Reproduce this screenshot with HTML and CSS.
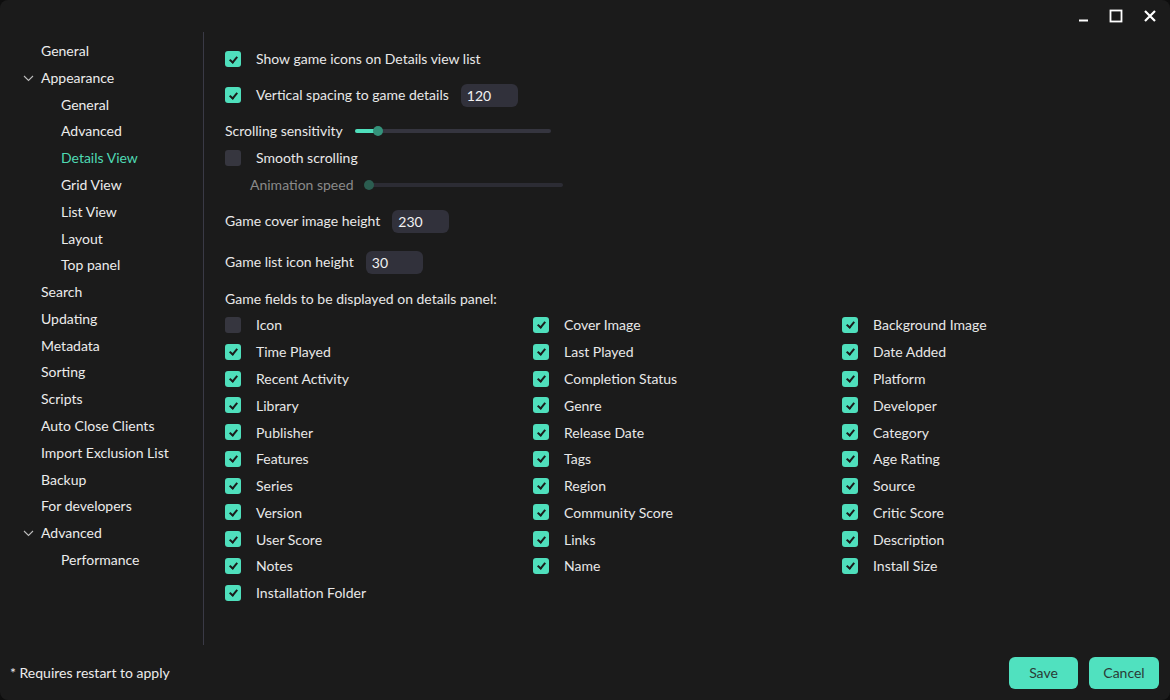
FILE: index.html
```html
<!DOCTYPE html>
<html>
<head>
<meta charset="utf-8">
<link rel="stylesheet" href="styles.css">
</head>
<body>
<div class="window">
  <div class="titlebar">
    <div class="wc wc-min"><svg width="12" height="12" viewBox="0 0 12 12"><line x1="1" y1="9.5" x2="10" y2="9.5" stroke="#fff" stroke-width="2"/></svg></div>
    <div class="wc wc-max"><svg width="14" height="14" viewBox="0 0 14 14"><rect x="1.5" y="1.5" width="11" height="11" fill="none" stroke="#fff" stroke-width="1.8"/></svg></div>
    <div class="wc wc-close"><svg width="14" height="14" viewBox="0 0 14 14"><path d="M2 2 L12 12 M12 2 L2 12" stroke="#fff" stroke-width="2.2"/></svg></div>
  </div>
  <div class="main">
    <nav class="sidebar">
      <div class="nav l1">General</div>
      <div class="nav l1"><span class="chev"><svg width="11" height="7" viewBox="0 0 11 7"><path d="M1 1 L5.5 5.5 L10 1" fill="none" stroke="#bbb" stroke-width="1.1"/></svg></span>Appearance</div>
      <div class="nav l2">General</div>
      <div class="nav l2">Advanced</div>
      <div class="nav l2 active">Details View</div>
      <div class="nav l2">Grid View</div>
      <div class="nav l2">List View</div>
      <div class="nav l2">Layout</div>
      <div class="nav l2">Top panel</div>
      <div class="nav l1">Search</div>
      <div class="nav l1">Updating</div>
      <div class="nav l1">Metadata</div>
      <div class="nav l1">Sorting</div>
      <div class="nav l1">Scripts</div>
      <div class="nav l1">Auto Close Clients</div>
      <div class="nav l1">Import Exclusion List</div>
      <div class="nav l1">Backup</div>
      <div class="nav l1">For developers</div>
      <div class="nav l1"><span class="chev"><svg width="11" height="7" viewBox="0 0 11 7"><path d="M1 1 L5.5 5.5 L10 1" fill="none" stroke="#bbb" stroke-width="1.1"/></svg></span>Advanced</div>
      <div class="nav l2">Performance</div>
    </nav>
    <section class="content">
      <div class="row r1"><span class="cb on"></span><span class="lbl">Show game icons on Details view list</span></div>
      <div class="row r2"><span class="cb on"></span><span class="lbl">Vertical spacing to game details</span><span class="input">120</span></div>
      <div class="row r3"><span class="plain">Scrolling sensitivity</span>
        <div class="slider s1"><div class="fill"></div><div class="thumb"></div></div></div>
      <div class="row r4"><span class="cb"></span><span class="lbl">Smooth scrolling</span></div>
      <div class="row r5"><span class="plain dim">Animation speed</span>
        <div class="slider s2"><div class="thumb"></div></div></div>
      <div class="row r6"><span class="plain">Game cover image height</span><span class="input">230</span></div>
      <div class="row r7"><span class="plain">Game list icon height</span><span class="input">30</span></div>
      <div class="row r8"><span class="plain">Game fields to be displayed on details panel:</span></div>
      <div class="fields">
        <div class="f"><span class="cb"></span><span class="lbl">Icon</span></div>
        <div class="f"><span class="cb on"></span><span class="lbl">Cover Image</span></div>
        <div class="f"><span class="cb on"></span><span class="lbl">Background Image</span></div>
        <div class="f"><span class="cb on"></span><span class="lbl">Time Played</span></div>
        <div class="f"><span class="cb on"></span><span class="lbl">Last Played</span></div>
        <div class="f"><span class="cb on"></span><span class="lbl">Date Added</span></div>
        <div class="f"><span class="cb on"></span><span class="lbl">Recent Activity</span></div>
        <div class="f"><span class="cb on"></span><span class="lbl">Completion Status</span></div>
        <div class="f"><span class="cb on"></span><span class="lbl">Platform</span></div>
        <div class="f"><span class="cb on"></span><span class="lbl">Library</span></div>
        <div class="f"><span class="cb on"></span><span class="lbl">Genre</span></div>
        <div class="f"><span class="cb on"></span><span class="lbl">Developer</span></div>
        <div class="f"><span class="cb on"></span><span class="lbl">Publisher</span></div>
        <div class="f"><span class="cb on"></span><span class="lbl">Release Date</span></div>
        <div class="f"><span class="cb on"></span><span class="lbl">Category</span></div>
        <div class="f"><span class="cb on"></span><span class="lbl">Features</span></div>
        <div class="f"><span class="cb on"></span><span class="lbl">Tags</span></div>
        <div class="f"><span class="cb on"></span><span class="lbl">Age Rating</span></div>
        <div class="f"><span class="cb on"></span><span class="lbl">Series</span></div>
        <div class="f"><span class="cb on"></span><span class="lbl">Region</span></div>
        <div class="f"><span class="cb on"></span><span class="lbl">Source</span></div>
        <div class="f"><span class="cb on"></span><span class="lbl">Version</span></div>
        <div class="f"><span class="cb on"></span><span class="lbl">Community Score</span></div>
        <div class="f"><span class="cb on"></span><span class="lbl">Critic Score</span></div>
        <div class="f"><span class="cb on"></span><span class="lbl">User Score</span></div>
        <div class="f"><span class="cb on"></span><span class="lbl">Links</span></div>
        <div class="f"><span class="cb on"></span><span class="lbl">Description</span></div>
        <div class="f"><span class="cb on"></span><span class="lbl">Notes</span></div>
        <div class="f"><span class="cb on"></span><span class="lbl">Name</span></div>
        <div class="f"><span class="cb on"></span><span class="lbl">Install Size</span></div>
        <div class="f"><span class="cb on"></span><span class="lbl">Installation Folder</span></div>
      </div>
    </section>
  </div>
  <div class="footer">
    <span class="note">* Requires restart to apply</span>
    <div class="buttons">
      <button class="btn">Save</button>
      <button class="btn">Cancel</button>
    </div>
  </div>
</div>
</body>
</html>
```

FILE: styles.css
```css
* { box-sizing: border-box; }
html, body {
  margin: 0;
  padding: 0;
  background: #0e0e0e;
}
body {
  font-family: Lato, "Open Sans", sans-serif;
  font-size: 14px;
  color: #e8e8e8;
}
.window {
  width: 1170px;
  height: 700px;
  background: #1b1b1b;
  border-radius: 8px;
  display: flex;
  flex-direction: column;
  overflow: hidden;
}
.titlebar {
  height: 32px;
  display: flex;
  justify-content: flex-end;
  align-items: center;
  padding-right: 3px;
}
.wc {
  width: 34px;
  height: 32px;
  display: flex;
  align-items: center;
  justify-content: center;
}
.wc-min svg { margin-top: 2px; margin-left: 3px; }
.wc-max svg { margin-left: 0; }
.main {
  height: 613px;
  display: flex;
}
.sidebar {
  width: 204px;
  border-right: 1px solid #3a3a46;
  padding-top: 5.2px;
}
.nav {
  height: 26.79px;
  display: flex;
  align-items: center;
  color: #ececec;
  white-space: nowrap;
}
.nav.l1 { padding-left: 41px; position: relative; }
.nav.l2 { padding-left: 61px; }
.nav.active { color: #4fd9b3; }
.chev {
  position: absolute;
  left: 23px;
  top: 11px;
  display: flex;
}
.content {
  flex: 1;
  padding-top: 15px;
  padding-left: 21px;
  display: flex;
  flex-direction: column;
}
.row {
  height: 24px;
  display: flex;
  align-items: center;
}
.row .lbl, .row .plain { position: relative; top: -1px; }
.r2 { margin-top: 12px; }
.r3 { margin-top: 12px; }
.r4 { margin-top: 3px; }
.r5 { margin-top: 3px; }
.r6 { margin-top: 12px; }
.r7 { margin-top: 17px; }
.r8 { margin-top: 12px; }
.r8 .plain { top: 0; }
.cb {
  width: 16px;
  height: 16px;
  border-radius: 3px;
  background: #36363f;
  flex: none;
  position: relative;
}
.cb.on { background: #4fdfbc; }
.cb.on::after {
  content: "";
  position: absolute;
  left: 5.5px;
  top: 3.5px;
  width: 3px;
  height: 6px;
  border-right: 2px solid #1b1b1b;
  border-bottom: 2px solid #1b1b1b;
  transform: rotate(40deg);
}
.lbl { margin-left: 15px; white-space: nowrap; }
.plain { white-space: nowrap; }
.dim { color: #8a8a8a; margin-left: 25px; }
.input {
  margin-left: 12px;
  width: 57px;
  height: 23px;
  border-radius: 6px;
  background: #31313b;
  display: flex;
  align-items: center;
  padding-left: 6px;
  color: #f2f2f2;
}
.slider {
  position: relative;
  height: 4px;
  border-radius: 2px;
  background: #35353f;
  margin-left: 12px;
}
.s1 { width: 196px; }
.s2 { width: 197px; margin-left: 12px; background: #2c2c34; }
.fill {
  position: absolute;
  left: 0;
  top: 0;
  height: 4px;
  width: 24px;
  border-radius: 2px;
  background: #4fdfbc;
}
.thumb {
  position: absolute;
  top: -3px;
  width: 10px;
  height: 10px;
  border-radius: 50%;
}
.s1 .thumb { left: 18px; background: #34927a; }
.s2 .thumb { left: -2px; background: #2b5d50; }
.fields {
  margin-top: 1.6px;
  display: grid;
  grid-template-columns: 308px 309px 1fr;
  grid-auto-rows: 26.77px;
}
.f {
  display: flex;
  align-items: center;
}
.footer {
  flex: 1;
  display: flex;
  align-items: center;
  justify-content: space-between;
  padding: 0 11px 0 10px;
}
.note { color: #ececec; margin-top: -1px; }
.buttons {
  display: flex;
  gap: 11px;
}
.btn {
  height: 32px;
  width: 69px;
  border: none;
  border-radius: 6px;
  background: #50e1bf;
  color: #2a3a36;
  font-family: Lato, "Open Sans", sans-serif;
  font-size: 14px;
  padding: 0;
}
.btn + .btn { width: 70px; }
```
